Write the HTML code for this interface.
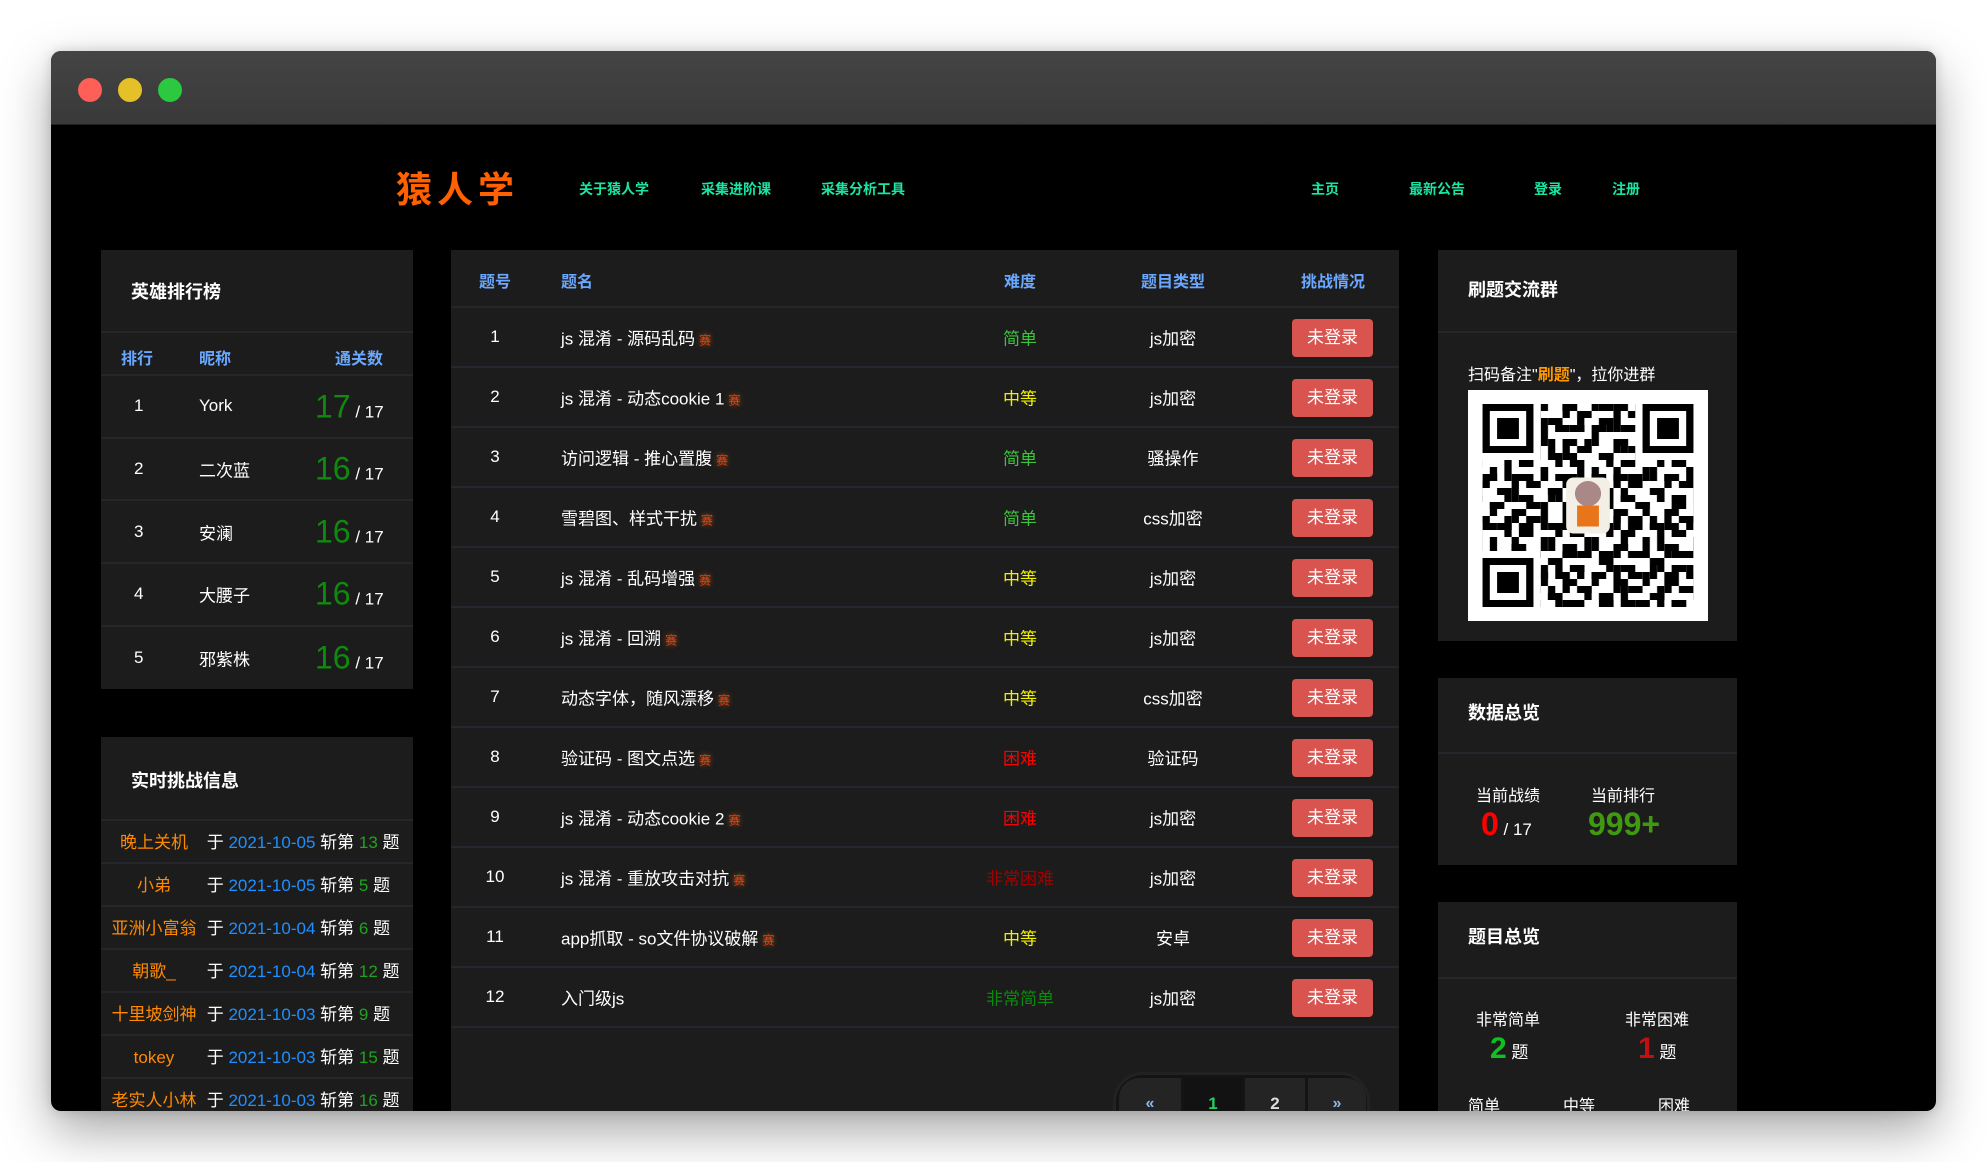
<!DOCTYPE html>
<html><head><meta charset="utf-8">
<style>
*{box-sizing:border-box;margin:0;padding:0}
body{width:1987px;height:1162px;background:#fff;overflow:hidden;font-family:"Liberation Sans","Noto Sans CJK SC",sans-serif;position:relative}
.win{position:absolute;left:51px;top:51px;width:1885px;height:1060px;border-radius:10px;overflow:hidden;background:#000;box-shadow:0 20px 50px rgba(0,0,0,.35),0 0 12px rgba(0,0,0,.15)}
.tb{position:absolute;left:0;top:0;width:100%;height:74px;background:linear-gradient(#444,#393939);border-bottom:1px solid #222}
.dot{position:absolute;top:27px;width:24px;height:24px;border-radius:50%}
.a{position:absolute;white-space:nowrap}
.nav{font-size:14px;font-weight:bold;color:#19e6a4;top:128px}
.panel{position:absolute;background:#1c1c1c}
.ptitle{position:absolute;left:30px;font-size:18px;font-weight:bold;color:#fff}
.hr{position:absolute;left:0;right:0;height:2px;background:#24262c}
.blue{color:#6aa8ff;font-weight:bold;font-size:16px}
.row{position:absolute;left:0;right:0;height:60px;border-bottom:2px solid #25272e;color:#fff;font-size:17px}
.row>span{position:absolute;top:50%;transform:translateY(-50%);white-space:nowrap}
.c{transform:translate(-50%,-50%)!important}
.btn{position:absolute;left:841px;top:11px;width:81px;height:38px;background:#d9534f;border-radius:4px;color:#fff;font-size:17px;text-align:center;line-height:38px}
.sai{color:#e0401a;font-size:12px;text-shadow:0 0 6px rgba(255,120,0,.6);margin-left:4px}
.lrow{position:absolute;left:0;right:0;height:62.7px;border-bottom:2px solid #24262c;color:#fff;font-size:17px}
.lrow span{position:absolute;top:50%;transform:translateY(-50%)}
.rrow{position:absolute;left:0;right:0;height:43px;border-bottom:2px solid #24262c;font-size:17px;color:#fff;line-height:43px;white-space:nowrap}
.or{color:#ff8a00;display:inline-block;width:96px;text-align:center;margin-left:5px}
.dt{color:#1e90ff}.gn{color:#1fa31f}
</style></head><body>
<div class="win">
<div class="tb">
<div class="dot" style="left:27px;background:#fe5f57"></div>
<div class="dot" style="left:67px;background:#e6c029"></div>
<div class="dot" style="left:107px;background:#2bc840"></div>
</div>

<div class="a" style="left:345px;top:110px;font-size:36px;font-weight:bold;color:#ff6000;letter-spacing:5px">猿人学</div>
<div class="a nav" style="left:528px">关于猿人学</div>
<div class="a nav" style="left:650px">采集进阶课</div>
<div class="a nav" style="left:770px">采集分析工具</div>
<div class="a nav" style="left:1260px">主页</div>
<div class="a nav" style="left:1358px">最新公告</div>
<div class="a nav" style="left:1483px">登录</div>
<div class="a nav" style="left:1561px">注册</div>

<div class="panel" style="left:50px;top:199px;width:312px;height:439px">
<div class="ptitle" style="top:28px">英雄排行榜</div>
<div class="hr" style="top:81px"></div>
<div class="a blue" style="left:20px;top:95px">排行</div>
<div class="a blue" style="left:98px;top:95px">昵称</div>
<div class="a blue" style="left:234px;top:95px">通关数</div>
<div class="hr" style="top:124px"></div>
<div class="lrow" style="top:126px"><span style="left:33px">1</span><span style="left:98px">York</span><span style="left:214px;margin-top:1px"><b style="color:#0f8a0f;font-size:32px;font-weight:normal">17</b> / 17</span></div>
<div class="lrow" style="top:188.7px"><span style="left:33px">2</span><span style="left:98px">二次蓝</span><span style="left:214px"><b style="color:#0f8a0f;font-size:32px;font-weight:normal">16</b> / 17</span></div>
<div class="lrow" style="top:251.4px"><span style="left:33px">3</span><span style="left:98px">安澜</span><span style="left:214px"><b style="color:#0f8a0f;font-size:32px;font-weight:normal">16</b> / 17</span></div>
<div class="lrow" style="top:314.1px"><span style="left:33px">4</span><span style="left:98px">大腰子</span><span style="left:214px"><b style="color:#0f8a0f;font-size:32px;font-weight:normal">16</b> / 17</span></div>
<div class="lrow" style="top:376.8px;border:none"><span style="left:33px">5</span><span style="left:98px">邪紫株</span><span style="left:214px"><b style="color:#0f8a0f;font-size:32px;font-weight:normal">16</b> / 17</span></div>
</div>

<div class="panel" style="left:50px;top:686px;width:312px;height:400px">
<div class="ptitle" style="top:30px">实时挑战信息</div>
<div class="hr" style="top:82px"></div>
<div class="rrow" style="top:84px"><span class="or">晚上关机</span> 于 <span class="dt">2021-10-05</span> 斩第 <span class="gn">13</span> 题</div>
<div class="rrow" style="top:127px"><span class="or">小弟</span> 于 <span class="dt">2021-10-05</span> 斩第 <span class="gn">5</span> 题</div>
<div class="rrow" style="top:170px"><span class="or">亚洲小富翁</span> 于 <span class="dt">2021-10-04</span> 斩第 <span class="gn">6</span> 题</div>
<div class="rrow" style="top:213px"><span class="or">朝歌_</span> 于 <span class="dt">2021-10-04</span> 斩第 <span class="gn">12</span> 题</div>
<div class="rrow" style="top:256px"><span class="or">十里坡剑神</span> 于 <span class="dt">2021-10-03</span> 斩第 <span class="gn">9</span> 题</div>
<div class="rrow" style="top:299px"><span class="or">tokey</span> 于 <span class="dt">2021-10-03</span> 斩第 <span class="gn">15</span> 题</div>
<div class="rrow" style="top:342px"><span class="or">老实人小林</span> 于 <span class="dt">2021-10-03</span> 斩第 <span class="gn">16</span> 题</div>
</div>

<div class="panel" style="left:400px;top:199px;width:948px;height:900px">
<div class="a blue" style="left:28px;top:18px">题号</div>
<div class="a blue" style="left:110px;top:18px">题名</div>
<div class="a blue" style="left:569px;top:18px;transform:translateX(-50%)">难度</div>
<div class="a blue" style="left:722px;top:18px;transform:translateX(-50%)">题目类型</div>
<div class="a blue" style="left:882px;top:18px;transform:translateX(-50%)">挑战情况</div>
<div class="hr" style="top:56px"></div>
<div style="position:absolute;left:0;right:0;top:58px">
<div class="row" style="top:0"><span class="c" style="left:44px">1</span><span style="left:110px">js 混淆 - 源码乱码<span class="sai">赛</span></span><span class="c" style="left:569px;color:#3cc33c">简单</span><span class="c" style="left:722px">js加密</span><div class="btn">未登录</div></div>
<div class="row" style="top:60px"><span class="c" style="left:44px">2</span><span style="left:110px">js 混淆 - 动态cookie 1<span class="sai">赛</span></span><span class="c" style="left:569px;color:#f0f000">中等</span><span class="c" style="left:722px">js加密</span><div class="btn">未登录</div></div>
<div class="row" style="top:120px"><span class="c" style="left:44px">3</span><span style="left:110px">访问逻辑 - 推心置腹<span class="sai">赛</span></span><span class="c" style="left:569px;color:#3cc33c">简单</span><span class="c" style="left:722px">骚操作</span><div class="btn">未登录</div></div>
<div class="row" style="top:180px"><span class="c" style="left:44px">4</span><span style="left:110px">雪碧图、样式干扰<span class="sai">赛</span></span><span class="c" style="left:569px;color:#3cc33c">简单</span><span class="c" style="left:722px">css加密</span><div class="btn">未登录</div></div>
<div class="row" style="top:240px"><span class="c" style="left:44px">5</span><span style="left:110px">js 混淆 - 乱码增强<span class="sai">赛</span></span><span class="c" style="left:569px;color:#f0f000">中等</span><span class="c" style="left:722px">js加密</span><div class="btn">未登录</div></div>
<div class="row" style="top:300px"><span class="c" style="left:44px">6</span><span style="left:110px">js 混淆 - 回溯<span class="sai">赛</span></span><span class="c" style="left:569px;color:#f0f000">中等</span><span class="c" style="left:722px">js加密</span><div class="btn">未登录</div></div>
<div class="row" style="top:360px"><span class="c" style="left:44px">7</span><span style="left:110px">动态字体，随风漂移<span class="sai">赛</span></span><span class="c" style="left:569px;color:#f0f000">中等</span><span class="c" style="left:722px">css加密</span><div class="btn">未登录</div></div>
<div class="row" style="top:420px"><span class="c" style="left:44px">8</span><span style="left:110px">验证码 - 图文点选<span class="sai">赛</span></span><span class="c" style="left:569px;color:#f00">困难</span><span class="c" style="left:722px">验证码</span><div class="btn">未登录</div></div>
<div class="row" style="top:480px"><span class="c" style="left:44px">9</span><span style="left:110px">js 混淆 - 动态cookie 2<span class="sai">赛</span></span><span class="c" style="left:569px;color:#f00">困难</span><span class="c" style="left:722px">js加密</span><div class="btn">未登录</div></div>
<div class="row" style="top:540px"><span class="c" style="left:44px">10</span><span style="left:110px">js 混淆 - 重放攻击对抗<span class="sai">赛</span></span><span class="c" style="left:569px;color:#a00000">非常困难</span><span class="c" style="left:722px">js加密</span><div class="btn">未登录</div></div>
<div class="row" style="top:600px"><span class="c" style="left:44px">11</span><span style="left:110px">app抓取 - so文件协议破解<span class="sai">赛</span></span><span class="c" style="left:569px;color:#f0f000">中等</span><span class="c" style="left:722px">安卓</span><div class="btn">未登录</div></div>
<div class="row" style="top:660px"><span class="c" style="left:44px">12</span><span style="left:110px">入门级js</span><span class="c" style="left:569px;color:#0a8a0a">非常简单</span><span class="c" style="left:722px">js加密</span><div class="btn">未登录</div></div>
</div>
<div style="position:absolute;left:662px;top:822px;width:257px;height:60px;border-radius:30px 30px 0 0;background:#141414;border:3px solid #222"></div>
<div style="position:absolute;left:668px;top:828px;width:62px;height:40px;background:#242424;border-radius:20px 0 0 0;color:#8fb8e8;font-weight:bold;text-align:center;line-height:52px;font-size:16px">«</div>
<div style="position:absolute;left:733px;top:828px;width:58px;height:40px;background:#121212;color:#22d060;font-weight:bold;text-align:center;line-height:52px;font-size:17px">1</div>
<div style="position:absolute;left:794px;top:828px;width:60px;height:40px;background:#242424;color:#ddd;font-weight:bold;text-align:center;line-height:52px;font-size:17px">2</div>
<div style="position:absolute;left:857px;top:828px;width:58px;height:40px;background:#242424;border-radius:0 20px 0 0;color:#8fb8e8;font-weight:bold;text-align:center;line-height:52px;font-size:16px">»</div>
</div>

<div class="panel" style="left:1387px;top:199px;width:299px;height:391px">
<div class="ptitle" style="top:26px">刷题交流群</div>
<div class="hr" style="top:81px"></div>
<div class="a" style="left:30px;top:111px;font-size:16px;color:#fff">扫码备注"<b style="color:#ff9900">刷题</b>"，拉你进群</div>
<div style="position:absolute;left:30px;top:140px;width:240px;height:231px;background:#fff">
<svg width="240" height="231" viewBox="0 0 33 33" preserveAspectRatio="none">
<defs><pattern id="p" width="7" height="5" patternUnits="userSpaceOnUse"><rect x="0" y="0" width="2" height="1"/><rect x="3" y="1" width="1" height="2"/><rect x="5" y="0" width="1" height="1"/><rect x="1" y="3" width="2" height="1"/><rect x="4" y="4" width="2" height="1"/><rect x="6" y="2" width="1" height="2"/><rect x="0" y="2" width="1" height="1"/></pattern>
<pattern id="q" width="5" height="7" patternUnits="userSpaceOnUse"><rect x="1" y="0" width="1" height="2"/><rect x="3" y="2" width="2" height="1"/><rect x="0" y="4" width="1" height="2"/><rect x="2" y="5" width="2" height="1"/></pattern></defs>
<rect x="2" y="2" width="29" height="29" fill="url(#p)"/>
<rect x="2" y="2" width="29" height="29" fill="url(#q)"/>
<g><rect x="1" y="1" width="9" height="9" fill="#fff"/><rect x="2" y="2" width="7" height="7"/><rect x="3" y="3" width="5" height="5" fill="#fff"/><rect x="4" y="4" width="3" height="3"/></g>
<g><rect x="23" y="1" width="9" height="9" fill="#fff"/><rect x="24" y="2" width="7" height="7"/><rect x="25" y="3" width="5" height="5" fill="#fff"/><rect x="26" y="4" width="3" height="3"/></g>
<g><rect x="1" y="23" width="9" height="9" fill="#fff"/><rect x="2" y="24" width="7" height="7"/><rect x="3" y="25" width="5" height="5" fill="#fff"/><rect x="4" y="26" width="3" height="3"/></g>
<rect x="13.5" y="12.5" width="6" height="8" rx="1" fill="#f4efe6"/>
<circle cx="16.5" cy="14.8" r="1.8" fill="#a88"/><rect x="15" y="16.5" width="3" height="3" fill="#e8751a"/>
</svg></div>
</div>

<div class="panel" style="left:1387px;top:627px;width:299px;height:187px">
<div class="ptitle" style="top:21px">数据总览</div>
<div class="hr" style="top:74px"></div>
<div class="a" style="left:38px;top:104px;font-size:16px;color:#fff">当前战绩</div>
<div class="a" style="left:153px;top:104px;font-size:16px;color:#fff">当前排行</div>
<div class="a" style="left:43px;top:128px;font-size:17px;color:#fff"><b style="color:#f00;font-size:32px">0</b> / 17</div>
<div class="a" style="left:150px;top:128px;font-size:32px;font-weight:bold;color:#3f9a10">999+</div>
</div>

<div class="panel" style="left:1387px;top:851px;width:299px;height:250px">
<div class="ptitle" style="top:21px">题目总览</div>
<div class="hr" style="top:75px"></div>
<div class="a" style="left:38px;top:104px;font-size:16px;color:#fff">非常简单</div>
<div class="a" style="left:187px;top:104px;font-size:16px;color:#fff">非常困难</div>
<div class="a" style="left:52px;top:130px;font-size:17px;color:#fff"><b style="color:#10c020;font-size:30px">2</b> 题</div>
<div class="a" style="left:200px;top:130px;font-size:17px;color:#fff"><b style="color:#c01010;font-size:30px">1</b> 题</div>
<div class="a" style="left:30px;top:190px;font-size:16px;color:#fff">简单</div>
<div class="a" style="left:125px;top:190px;font-size:16px;color:#fff">中等</div>
<div class="a" style="left:220px;top:190px;font-size:16px;color:#fff">困难</div>
</div>
</div>
</body></html>
